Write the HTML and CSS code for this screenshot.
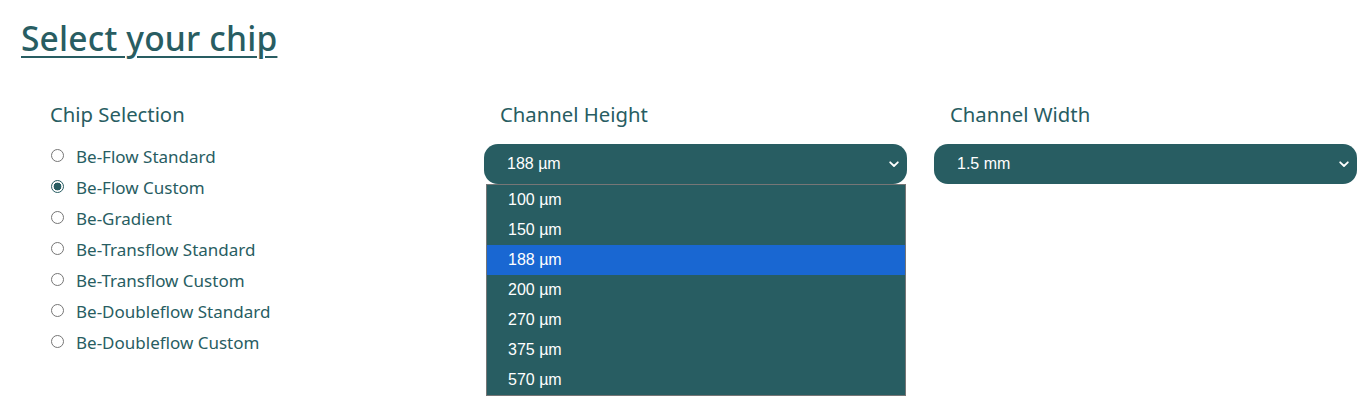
FILE: index.html
```html
<!DOCTYPE html>
<html lang="en">
<head>
<meta charset="utf-8">
<title>Select your chip</title>
<link rel="stylesheet" href="styles.css">
</head>
<body>
<main class="page">
  <h2 class="title">Select your chip</h2>
  <div class="columns">
    <section class="col">
      <h3 class="col-label">Chip Selection</h3>
      <ul class="radios">
        <li class="radio"><span class="dot"></span><span>Be-Flow Standard</span></li>
        <li class="radio"><span class="dot checked"></span><span>Be-Flow Custom</span></li>
        <li class="radio"><span class="dot"></span><span>Be-Gradient</span></li>
        <li class="radio"><span class="dot"></span><span>Be-Transflow Standard</span></li>
        <li class="radio"><span class="dot"></span><span>Be-Transflow Custom</span></li>
        <li class="radio"><span class="dot"></span><span>Be-Doubleflow Standard</span></li>
        <li class="radio"><span class="dot"></span><span>Be-Doubleflow Custom</span></li>
      </ul>
    </section>
    <section class="col">
      <h3 class="col-label">Channel Height</h3>
      <div class="select-wrap">
        <div class="select"><span>188 µm</span>
          <svg class="chev" width="10" height="7" viewBox="0 0 10 7"><path d="M1.2 1.3 L5 5 L8.8 1.3" fill="none" stroke="#fff" stroke-width="1.8" stroke-linecap="round" stroke-linejoin="round"/></svg>
        </div>
        <ul class="dropdown">
          <li class="opt">100 µm</li>
          <li class="opt">150 µm</li>
          <li class="opt active">188 µm</li>
          <li class="opt">200 µm</li>
          <li class="opt">270 µm</li>
          <li class="opt">375 µm</li>
          <li class="opt">570 µm</li>
        </ul>
      </div>
    </section>
    <section class="col">
      <h3 class="col-label">Channel Width</h3>
      <div class="select-wrap">
        <div class="select"><span>1.5 mm</span>
          <svg class="chev" width="10" height="7" viewBox="0 0 10 7"><path d="M1.2 1.3 L5 5 L8.8 1.3" fill="none" stroke="#fff" stroke-width="1.8" stroke-linecap="round" stroke-linejoin="round"/></svg>
        </div>
      </div>
    </section>
  </div>
</main>
</body>
</html>
```
FILE: styles.css
```css
html, body {
  margin: 0;
  padding: 0;
  background: #ffffff;
}
.page {
  font-family: "Noto Sans", "Open Sans", sans-serif;
  color: #285d62;
  height: 402px;
  overflow: hidden;
}
.title {
  margin: 0;
  padding: 14px 0 0 21px;
  font-size: 33.5px;
  font-weight: 500;
  line-height: 48px;
  text-decoration: underline;
  text-decoration-thickness: 2px;
  text-underline-offset: 5px;
  letter-spacing: 0.2px;
}
.columns {
  display: grid;
  grid-template-columns: 423px 423px 423px;
  column-gap: 27px;
  padding: 39px 0 0 34px;
}
.col-label {
  margin: 0;
  padding-left: 16px;
  font-size: 20.3px;
  font-weight: 400;
  line-height: 26px;
}
.radios {
  list-style: none;
  margin: 14px 0 0 17px;
  padding: 0;
}
.radio {
  display: flex;
  align-items: center;
  gap: 12px;
  height: 31px;
  font-size: 17px;
}
.dot {
  width: 11px;
  height: 11px;
  border: 1px solid #767676;
  border-radius: 50%;
  flex: none;
  box-sizing: content-box;
  position: relative;
  top: -1px;
}
.dot.checked {
  border-color: #285d62;
  background: radial-gradient(circle, #285d62 0 3.6px, #fff 4.2px);
}
.select-wrap {
  position: relative;
  margin-top: 17px;
}
.select {
  height: 40px;
  border-radius: 14px;
  background: #285d62;
  color: #ffffff;
  font-family: "Liberation Sans", Arial, sans-serif;
  font-size: 16px;
  display: flex;
  align-items: center;
  justify-content: space-between;
  padding: 0 8px 0 23px;
}
.chev {
  display: block;
  margin-top: 1px;
}
.dropdown {
  position: absolute;
  top: 40px;
  left: 2px;
  width: 418px;
  margin: 0;
  padding: 0;
  list-style: none;
  background: #285d62;
  border: 1px solid #767676;
  z-index: 2;
}
.opt {
  height: 30px;
  line-height: 30px;
  padding-left: 21px;
  color: #ffffff;
  font-family: "Liberation Sans", Arial, sans-serif;
  font-size: 16px;
}
.opt.active {
  background: #1967d2;
}
```
